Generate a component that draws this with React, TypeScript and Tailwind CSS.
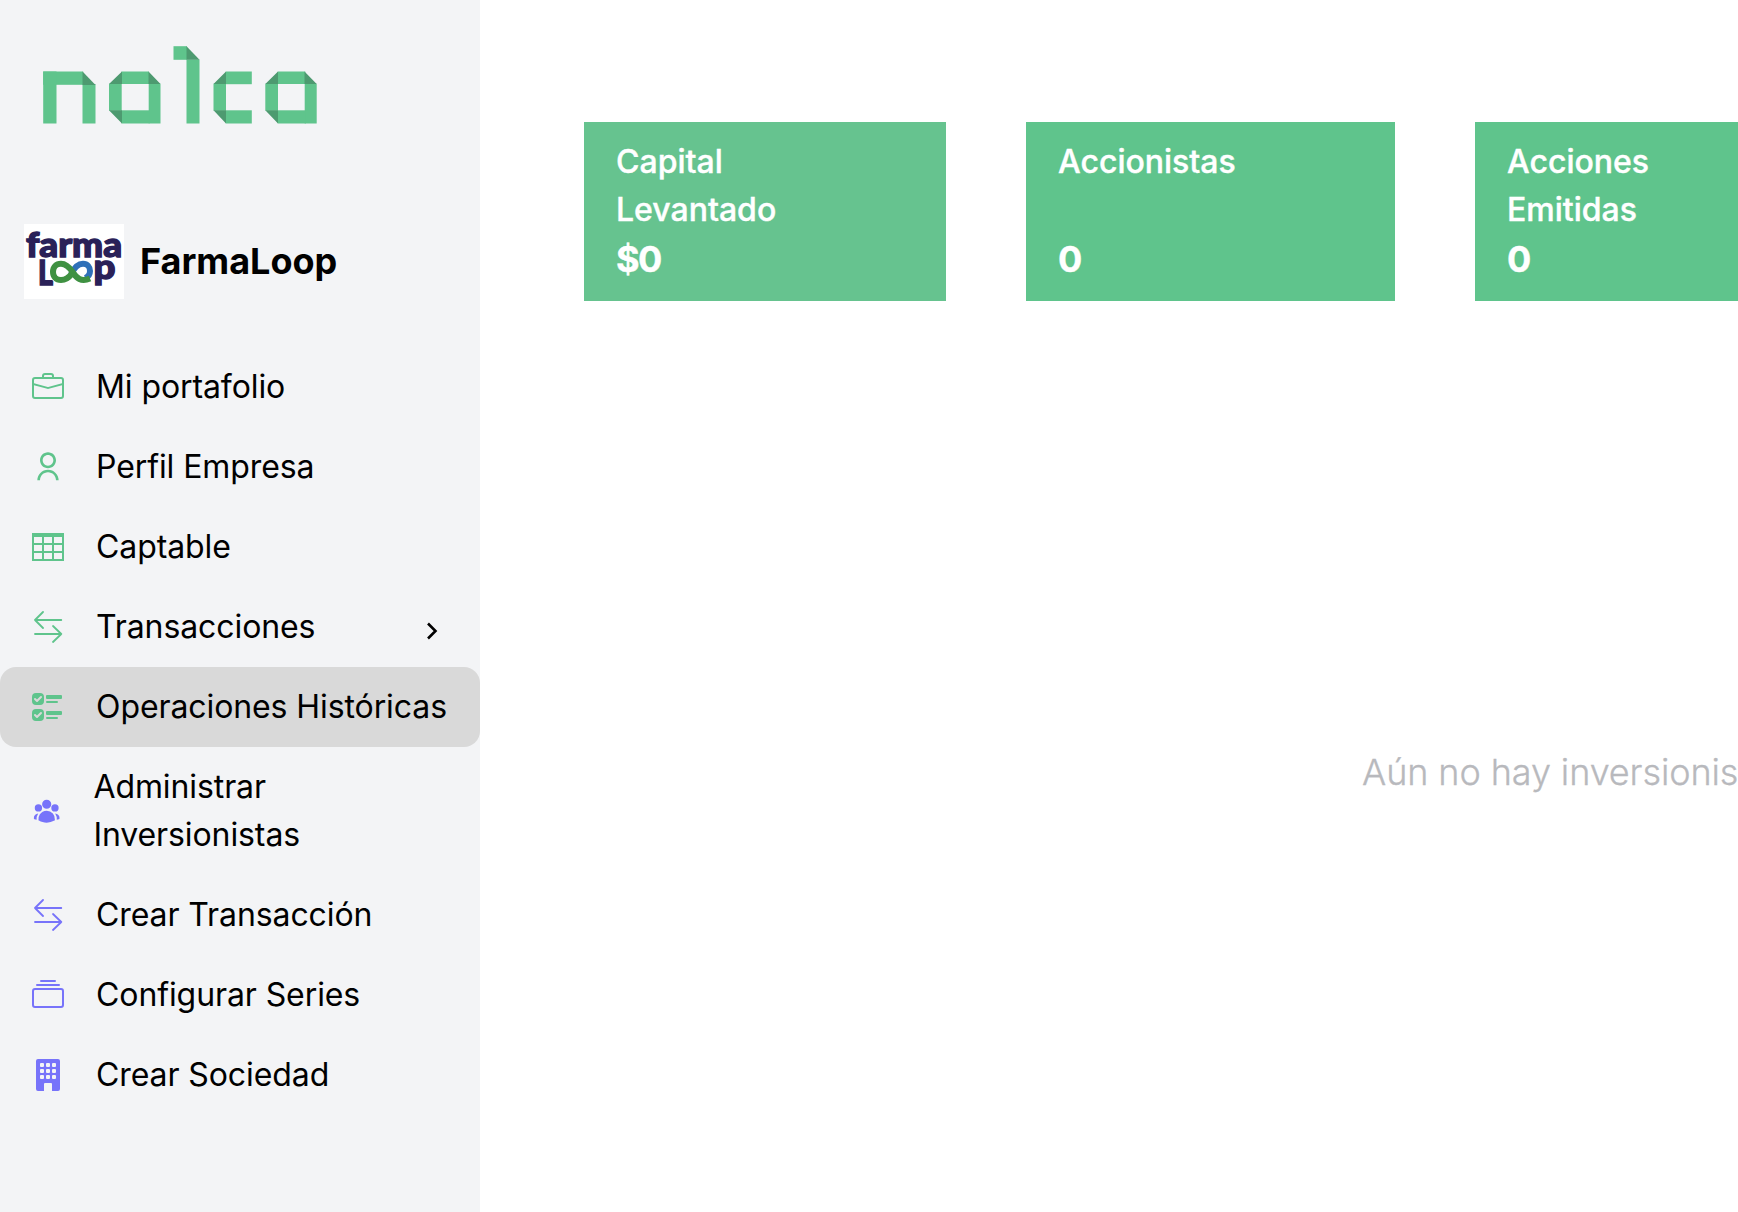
import type { ReactNode } from "react";
import {
  BsBriefcase,
  BsBuildingFill,
  BsCollection,
  BsUiChecks,
} from "react-icons/bs";
import { RiUserLine } from "react-icons/ri";
import { HiUserGroup } from "react-icons/hi2";

const GREEN = "#5fc48c";
const FOLD = "#4d9a70";

function Ribbon({ x, y, w, h }: { x: number; y: number; w: number; h: number }) {
  return <rect x={x} y={y} width={w} height={h} fill={GREEN} />;
}

function NalcaLogo() {
  return (
    <svg width="276" height="80" viewBox="43 45 276 80" role="img" aria-label="nalca">
      <Ribbon x={43.2} y={71.5} w={40} h={13.3} />
      <Ribbon x={43.2} y={71.5} w={13.3} h={52} />
      <Ribbon x={82.5} y={84} w={13} h={39.5} />

      <Ribbon x={121.5} y={71.5} w={27.5} h={12.5} />
      <Ribbon x={109} y={83.7} w={12.7} h={27} />
      <Ribbon x={148.7} y={83.7} w={11.8} h={39.8} />
      <Ribbon x={121.5} y={110.3} w={28} h={13.2} />

      <Ribbon x={173.5} y={46.2} w={13.5} h={13.6} />
      <Ribbon x={186.5} y={59.5} w={13} h={64} />

      <Ribbon x={225.8} y={71.5} w={26} h={12.7} />
      <Ribbon x={213.5} y={83.7} w={12.5} h={27} />
      <Ribbon x={225.8} y={110.3} w={26} h={13.2} />

      <Ribbon x={277.8} y={71.5} w={27.5} h={12.5} />
      <Ribbon x={265.3} y={83.7} w={12.7} h={27} />
      <Ribbon x={304.7} y={83.7} w={12} h={39.8} />
      <Ribbon x={277.8} y={110.3} w={28} h={13.2} />

      <g fill={FOLD}>
        <path d="M82.5 71.5L95.5 85H82.5Z" />
        <path d="M122 71.5V84H109ZM148.5 71.5L160.5 84H148.5ZM109 110.3H122V123.5Z" />
        <path d="M186.5 46.2L199.5 59.8H186.5Z" />
        <path d="M226 71.5V84H213.5ZM213.5 110.3H226V123.5Z" />
        <path d="M278 71.5V84H265.3ZM304.5 71.5L316.7 84H304.5ZM265.3 110.3H278V123.5Z" />
      </g>
    </svg>
  );
}

function FarmaLoopLogo() {
  return (
    <svg width="100" height="75" viewBox="0 0 100 75" className="shrink-0 bg-white">
      <g fill="#2a2158" stroke="#2a2158" strokeWidth="1.4" fontFamily="Lato, sans-serif" fontWeight="900">
        <text x="2" y="33" fontSize="35" textLength="96" lengthAdjust="spacingAndGlyphs">farma</text>
        <text x="14" y="61" fontSize="34" textLength="15" lengthAdjust="spacingAndGlyphs">L</text>
        <text x="69.5" y="55" fontSize="35" textLength="22" lengthAdjust="spacingAndGlyphs">p</text>
      </g>
      <circle cx="37" cy="47.8" r="12" fill="white" />
      <g fill="none" strokeWidth="6">
        <path d="M47 50.5C50 44 54 39.8 59 39.8C63.5 39.8 66 43 66 47C66 50.5 64 53 61 54" stroke="#2f70b8" />
        <path d="M66 54.5C57 58.5 52.5 54 48.5 48C44.5 42 41 39.8 37 39.8C32 39.8 29 43.2 29 48C29 52.5 32 56 37 56C42 56 45 53.5 47.5 50" stroke="#3f9142" />
      </g>
    </svg>
  );
}

function TableIcon() {
  return (
    <svg width="32" height="32" viewBox="0 0 32 32" fill="currentColor">
      <path d="M0 2H32V30H0ZM2 6V12H10V6ZM12 6V12H20V6ZM22 6V12H30V6ZM2 14V20H10V14ZM12 14V20H20V14ZM22 14V20H30V14ZM2 22V28H10V22ZM12 22V28H20V22ZM22 22V28H30V22Z" fillRule="evenodd" />
    </svg>
  );
}

function SwapIcon() {
  return (
    <svg width="32" height="32" viewBox="0 0 32 32" fill="none" stroke="currentColor" strokeWidth="1.8" strokeLinecap="round" strokeLinejoin="round">
      <path d="M29.3 9H3M11 1L3 9L11 17M3 23H29.3M21 15L29.3 23L21 31" />
    </svg>
  );
}

type Item = {
  label: string;
  icon: ReactNode;
  admin?: boolean;
  active?: boolean;
  expandable?: boolean;
  wraps?: boolean;
};

const items: Item[] = [
  { label: "Mi portafolio", icon: <BsBriefcase size={32} /> },
  { label: "Perfil Empresa", icon: <RiUserLine size={32} /> },
  { label: "Captable", icon: <TableIcon /> },
  { label: "Transacciones", icon: <SwapIcon />, expandable: true },
  { label: "Operaciones Históricas", icon: <BsUiChecks size={32} />, active: true },
  { label: "Administrar Inversionistas", icon: <HiUserGroup size={29.4} />, admin: true, wraps: true },
  { label: "Crear Transacción", icon: <SwapIcon />, admin: true },
  { label: "Configurar Series", icon: <BsCollection size={32} />, admin: true },
  { label: "Crear Sociedad", icon: <BsBuildingFill size={32} />, admin: true },
];

function NavItem({ item }: { item: Item }) {
  return (
    <li className={`flex items-center rounded-2xl py-4 pl-8 ${item.active ? "bg-[#d9d9d9]" : ""}`}>
      <span className={`shrink-0 ${item.admin ? "text-[#7773fa]" : "text-[#5fc48c]"}`}>{item.icon}</span>
      <span className={`ml-8 text-[32px] leading-[48px] tracking-[-0.09px] text-black ${item.wraps ? "w-[300px]" : "whitespace-nowrap"}`}>
        {item.label}
      </span>
      {item.expandable && (
        <svg className="mt-2 mr-[42px] ml-auto" width="12" height="18" viewBox="0 0 12 18" fill="none" stroke="black" strokeWidth="2.6">
          <path d="M2 1.5L9.5 9L2 16.5" />
        </svg>
      )}
    </li>
  );
}

function StatCard({ title, value, className }: { title: string; value: string; className: string }) {
  return (
    <div className={`flex shrink-0 flex-col justify-between px-8 py-4 text-white ${className}`}>
      <div className="w-[200px] text-[32px] leading-[48px] font-medium [-webkit-text-stroke:0.4px_white]">{title}</div>
      <div className="text-[36px] leading-[51px] font-bold tracking-[-1.5px] [-webkit-text-stroke:0.4px_white]">{value}</div>
    </div>
  );
}

export default function App() {
  return (
    <div className="flex h-[1212px] w-[1738px] overflow-hidden bg-white font-['Inter',sans-serif]">
      <aside className="w-[480px] shrink-0 bg-[#f3f4f6]">
        <div className="pt-[45px] pl-[43px]">
          <NalcaLogo />
        </div>
        <div className="mt-[99px] flex items-center gap-4 pl-6">
          <FarmaLoopLogo />
          <span className="pb-0.5 text-[36px] leading-[56px] font-bold text-black">FarmaLoop</span>
        </div>
        <ul className="mt-12">
          {items.map((item) => (
            <NavItem key={item.label} item={item} />
          ))}
        </ul>
      </aside>
      <main className="min-w-0 flex-1 overflow-hidden">
        <section className="flex h-[301px] gap-20 pt-[122px] pl-[104px]">
          <StatCard title="Capital Levantado" value="$0" className="w-[362px] bg-[#66c38f]" />
          <StatCard title="Accionistas" value="0" className="w-[369px] bg-[#5fc48c]" />
          <StatCard title="Acciones Emitidas" value="0" className="w-[369px] bg-[#5fc48c]" />
        </section>
        <p className="mt-[443px] pl-[882px] text-[36px] leading-[56px] font-light tracking-[-0.1px] whitespace-nowrap text-[#b8b9bd] [-webkit-text-stroke:0.3px_#b8b9bd]">
          Aún no hay inversionistas
        </p>
      </main>
    </div>
  );
}
